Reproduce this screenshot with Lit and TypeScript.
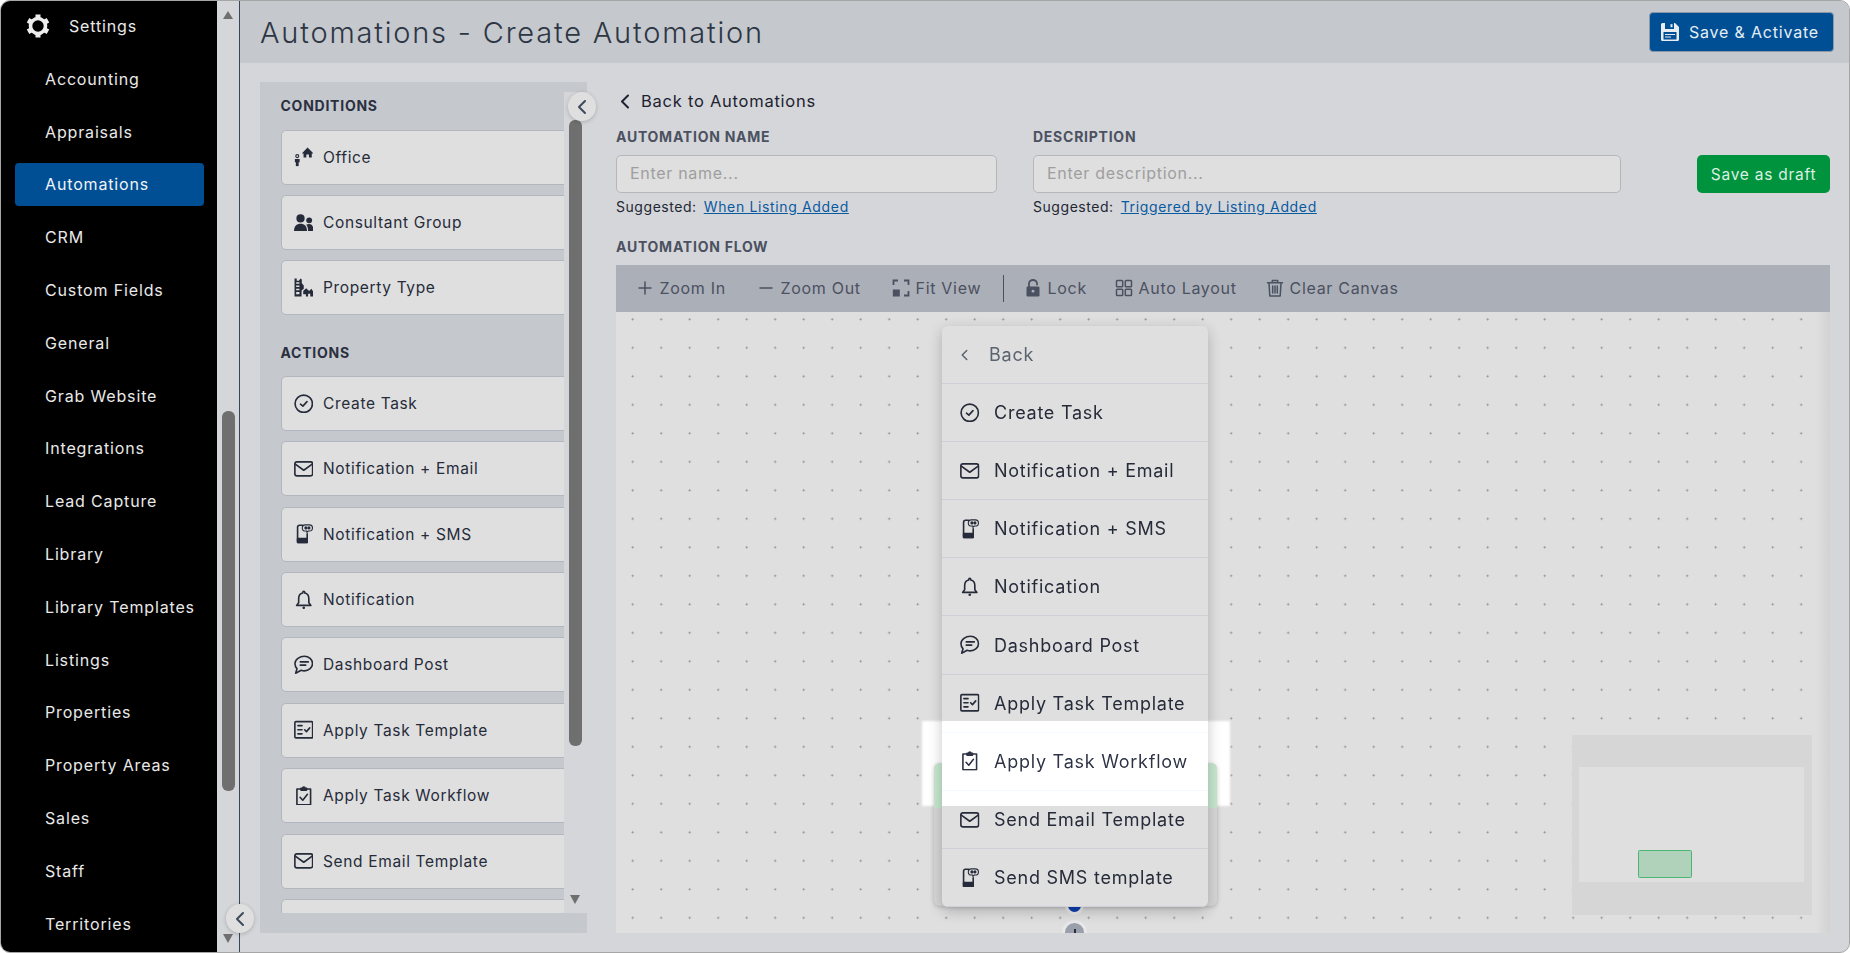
import { LitElement, html, css } from "lit";
import { customElement } from "lit/decorators.js";

const ic = (body: unknown) => html`<svg class="ic" viewBox="0 0 18 18" fill="none" stroke="currentColor" stroke-width="1.5" stroke-linecap="round" stroke-linejoin="round">${body}</svg>`;

const icons: Record<string, unknown> = {
  check: ic(html`<svg><circle cx="9" cy="9" r="8"/><path d="M6 9.400l2.200 1.800L12 7"/></svg>`),
  mail: ic(html`<svg><rect x=".8" y="2.600" width="16.400" height="13" rx="2"/><path d="M1.200 4.800L9 10.400l7.800-5.600"/></svg>`),
  sms: ic(html`<svg><path d="M8 1.200H5A1.700 1.700 0 0 0 3.300 2.900v12.700A1.700 1.700 0 0 0 5 17.300h5.500a1.700 1.700 0 0 0 1.700-1.700V9"/><path d="M3.300 13.500h8.900v3.800H3.300z" fill="currentColor"/><path d="M10.500.800h3.700a2.700 2.700 0 0 1 0 5.700h-1l-1.300 1.300V6.500h-1.400a2.800 2.800 0 0 1 0-5.700z" stroke-width="1"/><circle cx="11" cy="3.600" r=".7" fill="currentColor"/><circle cx="13.800" cy="3.600" r=".7" fill="currentColor"/></svg>`),
  bell: ic(html`<svg><path d="M9 1.200c-.5 0-.9.4-.9.9v.7C5.500 3.300 4.300 5.500 4.300 8.100v3.600L2.400 14.200h13.200l-1.900-2.500V8.100c0-2.600-1.200-4.800-3.800-5.300v-.7c0-.5-.4-.9-.9-.9z"/><circle cx="9" cy="16.400" r="1.200" fill="currentColor" stroke="none"/></svg>`),
  chat: ic(html`<svg><path d="M9.500 1.200c4.200 0 7.600 2.900 7.600 6.700s-3.400 6.700-7.600 6.700c-1 0-2-.2-2.900-.5L1.500 16.800l1.300-4C1.600 11.600.9 10 .9 7.900.9 4.100 5.300 1.200 9.500 1.200z"/><path d="M5.800 6.400h7.400M5.800 9.400h5"/></svg>`),
  template: ic(html`<svg><rect x=".8" y="1.500" width="16.400" height="15" rx="1"/><path d="M3.600 5.200h3.800M3.600 9h3.800M3.600 12.800h3.800M9.800 9l1.700 1.700 3-3.400"/></svg>`),
  workflow: ic(html`<svg><path d="M6 2.800H2.700v14.600h12.600V2.800H12"/><path d="M6.400 3.800V2.200h1.400a1.200 1.200 0 0 1 2.400 0h1.400v1.600z" fill="currentColor"/><path d="M5.600 10.400l2.500 2.700 4.300-5.400"/></svg>`),
  office: ic(html`<svg stroke="none" fill="currentColor"><path d="M12.500.500L18 6h-1.600v3.800h-2.600V7h-2.400v2.800H8.800V6H7.200z"/><circle cx="3" cy="8.400" r="1.400" fill="none" stroke="currentColor" stroke-width="1"/><path d="M.800 11h4.400v3H4.300v3.700H1.700V14H.800z"/></svg>`),
  group: ic(html`<svg stroke="none" fill="currentColor"><circle cx="6" cy="5" r="3.800"/><circle cx="14" cy="6.800" r="2.700"/><path d="M0 16.500c0-4.300 2.500-6.500 6-6.500s6 2.200 6 6.500z"/><path d="M13 16.500c0-2.800-.6-4.500-1.800-5.700.8-.4 1.800-.7 2.800-.7 2.600 0 4 2.200 4 6.400z"/></svg>`),
  ptype: ic(html`<svg stroke="none" fill="currentColor"><path d="M.500.500h2v2h2l1.500-2 1.200.8v3.500L9 7v3l-2 1.500V17H.500zM2 4v1.200h3V4zm0 3v1.200h3V7zm0 3v1.200h3V10zm0 3v2h3v-2z" fill-rule="evenodd"/><path d="M8.500 15V12l2.700-2.500L14 12l2-2 2 2.800V17h-3v-2.500h-2V17h-2v-2z"/></svg>`),
  plus: ic(html`<svg><path d="M9 3v12M3 9h12"/></svg>`),
  minus: ic(html`<svg><path d="M3 9h12"/></svg>`),
  fit: ic(html`<svg stroke-width="1.800" stroke-linecap="butt" stroke-linejoin="miter"><path d="M1.500 6V1.500H6M12 1.500h4.500V6M16.500 12v4.500H12"/><rect x=".8" y="10.500" width="7" height="7" fill="currentColor" stroke="none"/></svg>`),
  lock: ic(html`<svg><path d="M5 8V4.500a4 3.500 0 0 1 8 0v1" stroke-width="1.800"/><rect x="2.500" y="7.500" width="13" height="10" rx="1.200" fill="currentColor" stroke="none"/><circle cx="9" cy="12.200" r="1.400" fill="#abafb8" stroke="none"/></svg>`),
  grid: ic(html`<svg><rect x="1.500" y="1.500" width="6.200" height="6.200" rx=".8"/><rect x="10.300" y="1.500" width="6.200" height="6.200" rx=".8"/><rect x="1.500" y="10.300" width="6.200" height="6.200" rx=".8"/><rect x="10.300" y="10.300" width="6.200" height="6.200" rx=".8"/></svg>`),
  trash: ic(html`<svg><path d="M1.500 3.800h15M6.300 3.800V1.500h5.400v2.300M3 4l.8 13h10.400L15 4M6.700 7v7M11.300 7v7M9 7v7"/></svg>`),
};

const nav = ["Accounting", "Appraisals", "Automations", "CRM", "Custom Fields", "General", "Grab Website", "Integrations", "Lead Capture", "Library", "Library Templates", "Listings", "Properties", "Property Areas", "Sales", "Staff", "Territories"];

const conditions = [["office", "Office"], ["group", "Consultant Group"], ["ptype", "Property Type"]];

const actions = [
  ["check", "Create Task"], ["mail", "Notification + Email"], ["sms", "Notification + SMS"], ["bell", "Notification"],
  ["chat", "Dashboard Post"], ["template", "Apply Task Template"], ["workflow", "Apply Task Workflow"], ["mail", "Send Email Template"],
];

const menu = [...actions, ["sms", "Send SMS template"]];

// widths are the start-to-start distances of the toolbar items
const tools: [string, string, number][] = [
  ["plus", "Zoom In", 121], ["minus", "Zoom Out", 135], ["fit", "Fit View", 111], ["sep", "", 21],
  ["lock", "Lock", 91], ["grid", "Auto Layout", 151], ["trash", "Clear Canvas", 140],
];

@customElement("app-root")
export class AppRoot extends LitElement {
  static styles = css`
    :host {
      display: block;
      width: 1850px;
      height: 953px;
      background: #fff;
      font-family: Inter, "Noto Sans", sans-serif;
      color: #262b3a;
    }
    .frame {
      box-sizing: border-box;
      display: flex;
      width: 100%;
      height: 100%;
      border: 1px solid #a6a6a6;
      border-radius: 10px;
      overflow: hidden;
      background: #d5d6da;
    }
    .ic { width: 19.500px; height: 19.500px; flex: none; display: block; }

    /* sidebar */
    .side { width: 216px; flex: none; background: #000; color: #e9e9e9; font-size: 16px; letter-spacing: .85px; overflow: hidden; }
    .settings { display: flex; align-items: center; box-sizing: border-box; height: 51.900px; padding: 0 0 2px 24px; gap: 18px; }
    .gear { width: 26px; height: 26px; flex: none; }
    .nav-row { height: 52.800px; padding: 0 13px 0 14px; display: flex; align-items: center; }
    .nav-row span { flex: 1; height: 43px; line-height: 43px; padding-left: 30px; border-radius: 4px; }
    .nav-row .on { background: #004f94; color: #f0f4f8; }
    .side-bar { width: 22px; flex: none; background: #d5d6da; border-right: 1px solid #39445a; position: relative; }
    .thumb { background: #6f6f6f; border-radius: 6px; }
    .side-bar .thumb { width: 13px; height: 380px; margin: 410px 0 0 5px; }
    .arrow-up, .arrow-down { position: absolute; width: 0; height: 0; border-left: 5.500px solid transparent; border-right: 5.500px solid transparent; }
    .arrow-up { border-bottom: 8px solid #6f6f6f; }
    .arrow-down { border-top: 9px solid #6f6f6f; }
    .side-bar .arrow-up { left: 6px; top: 10px; }
    .side-bar .arrow-down { left: 6px; top: 933px; }
    .collapse {
      position: absolute;
      width: 28px;
      height: 29px;
      border-radius: 50%;
      background: #dfdfdf;
      box-shadow: 0 1px 4px rgba(0, 0, 0, .2);
      color: #3f4a5e;
      display: flex;
      align-items: center;
      justify-content: center;
      z-index: 3;
    }
    .side-bar .collapse { left: 9px; top: 903px; }
    .collapse svg { width: 14px; height: 16px; }

    /* main */
    .main { flex: 1; min-width: 0; display: flex; flex-direction: column; }
    .head { height: 62px; flex: none; background: #c5c8cd; display: flex; align-items: center; justify-content: space-between; padding: 0 15px 0 20px; }
    .title { font-size: 29px; font-weight: 300; letter-spacing: 1.800px; color: #2d3644; }
    .save { display: flex; align-items: center; gap: 9px; width: 185px; height: 40px; box-sizing: border-box; padding-left: 10px; background: #004f94; border: 1px solid #8a98a8; border-radius: 4px; color: #e6edf3; font-size: 16px; letter-spacing: .8px; }
    .save svg { width: 20px; height: 20px; }
    .body { flex: 1; display: flex; padding: 19px 19px 19px 20px; min-height: 0; }

    /* left panel */
    .panel { width: 327px; flex: none; background: #c5c8cd; display: flex; padding: 10px 0 20px; box-sizing: border-box; position: relative; }
    .list { flex: 1; overflow: hidden; padding-left: 20.500px; }
    .group-label { height: 28px; line-height: 28px; font-size: 14px; font-weight: 700; letter-spacing: .75px; color: #2a3040; }
    .cards { width: 320px; display: flex; flex-direction: column; gap: 10.400px; padding-top: 9.500px; }
    .actions-label { margin-top: 24px; }
    .actions-label + .cards { padding-top: 8.500px; }
    .card { height: 55px; box-sizing: border-box; background: #dfdfdf; border: 1px solid #b2b6be; border-radius: 5px; display: flex; align-items: center; padding-left: 12px; gap: 10px; font-size: 15.500px; letter-spacing: .65px; color: #262b3a; flex: none; }
    .strip { width: 23px; flex: none; background: #d5d6da; position: relative; }
    .strip .thumb { width: 13px; height: 626px; margin: 28px 0 0 5px; }
    .strip .arrow-down { left: 6px; top: 803px; }
    .panel > .collapse { left: 308px; top: 10px; }

    /* right column */
    .right { flex: 1; min-width: 0; margin-left: 29px; display: flex; flex-direction: column; }
    .back { display: flex; align-items: center; gap: 10px; height: 24px; margin-top: 7px; font-size: 16.500px; letter-spacing: .75px; color: #1d2230; padding-left: 3px; }
    .back svg { width: 12px; height: 17px; }
    .form { display: flex; margin-top: 14px; }
    .field { display: flex; flex-direction: column; }
    .field.name { width: 381px; margin-right: 36px; }
    .field.desc { width: 588px; }
    .label { height: 20px; line-height: 20px; font-size: 14px; font-weight: 700; letter-spacing: .75px; color: #4b5160; }
    .input { height: 38px; margin-top: 8px; box-sizing: border-box; background: #dfdfdf; border: 1.500px solid #b5b5bc; border-radius: 5px; padding-left: 13px; line-height: 35px; font-size: 16px; letter-spacing: .7px; color: #9e9e9e; }
    .hint { height: 20px; margin-top: 4px; line-height: 20px; font-size: 14px; letter-spacing: .55px; color: #222733; display: flex; gap: 7px; }
    .hint a { color: #0a5aa0; text-decoration: underline; letter-spacing: .65px; }
    .draft { margin: 28px 0 0 auto; width: 133px; height: 38px; display: flex; align-items: center; justify-content: center; background: #00933e; border-radius: 5px; color: #dcefe2; font-size: 15.500px; letter-spacing: .75px; }
    .flow-label { margin-top: 20px; }
    .toolbar { height: 47px; box-sizing: border-box; padding: 0 0 1px 20px; margin-top: 8px; flex: none; background: #abafb8; display: flex; align-items: center; color: #4b5160; font-size: 16px; letter-spacing: .7px; }
    .tool { display: flex; align-items: center; gap: 5.500px; flex: none; }
    .tool .ic { width: 18px; height: 18px; }
    .sep { width: 1px; height: 27px; background: #4b5160; }

    /* canvas */
    .canvas {
      flex: 1;
      position: relative;
      overflow: hidden;
      background-color: #dfdfdf;
      background-image: radial-gradient(circle, #8a8a8a 0, #8a8a8a .7px, transparent 1.300px);
      background-size: 28.500px 28.500px;
      background-position: 2.450px -6.950px;
    }
    .canvas::after { content: ""; position: absolute; top: 0; bottom: 0; right: 0; width: 14px; background: linear-gradient(90deg, transparent, #d2d2d2); }
    .glow { position: absolute; left: 306px; top: 409px; width: 308px; height: 85px; background: #fff; filter: blur(1.200px); }
    .node { position: absolute; left: 318px; top: 451px; width: 283px; height: 143px; border-radius: 6px; background: #d6d6d6; box-shadow: 0 1px 4px rgba(0, 0, 0, .2); overflow: hidden; }
    .node div { height: 45px; background: #c6e6cf; }
    .dot { position: absolute; left: 452px; top: 587px; width: 13px; height: 13px; border-radius: 50%; background: #0e3fae; box-shadow: 0 0 0 3px #eaeaea; }
    .add { position: absolute; left: 449px; top: 611px; width: 19px; height: 19px; border-radius: 50%; background: #9aa0ab; box-shadow: 0 0 0 3px #e8e8e8; }
    .add::after { content: ""; position: absolute; left: 9px; top: 6px; width: 1.500px; height: 12px; background: #2c2c3a; }
    .menu { position: absolute; left: 326px; top: 14px; width: 266px; border-radius: 6px; background: #dfdfdf; box-shadow: 0 4px 14px rgba(0, 0, 0, .22); overflow: hidden; z-index: 2; }
    .row { height: 58.100px; box-sizing: border-box; border-bottom: 1px solid #cdd0d6; display: flex; align-items: center; padding-left: 18px; gap: 14.500px; font-size: 18px; letter-spacing: .75px; color: #262b3a; }
    .row:last-of-type { border-bottom: 0; }
    .row.back-row { color: #5b6270; gap: 20px; }
    .row.back-row svg { width: 9px; height: 12px; }
    .spot { position: absolute; left: 0; right: 0; top: 395px; height: 85px; background: #292929; mix-blend-mode: color-dodge; }
    .mini { position: absolute; right: 18px; bottom: 18px; width: 240px; height: 180px; display: block; }
  `;

  private _chevron() {
    return html`<svg viewBox="0 0 12 16" fill="none" stroke="currentColor" stroke-width="2" stroke-linecap="round" stroke-linejoin="round"><path d="M9 2L3 8l6 6"/></svg>`;
  }

  private _card(item: string[]) {
    return html`<div class="card">${icons[item[0]]}<span>${item[1]}</span></div>`;
  }

  render() {
    return html`
      <div class="frame">
        <aside class="side">
          <div class="settings">
            <svg class="gear" viewBox="0 0 26 26" fill="none" stroke="#eee">
              <circle cx="13" cy="13" r="7.500" stroke-width="3.600"/>
              ${[0, 60, 120, 180, 240, 300].map((a) => html`<svg><path d="M13 1.500v3.500" stroke-width="5" transform="rotate(${a} 13 13)"/></svg>`)}
            </svg>
            <span>Settings</span>
          </div>
          ${nav.map((n) => html`<div class="nav-row"><span class=${n === "Automations" ? "on" : ""}>${n}</span></div>`)}
        </aside>
        <div class="side-bar">
          <div class="arrow-up"></div>
          <div class="thumb"></div>
          <div class="arrow-down"></div>
          <div class="collapse">${this._chevron()}</div>
        </div>
        <div class="main">
          <header class="head">
            <div class="title">Automations - Create Automation</div>
            <div class="save">
              <svg viewBox="0 0 20 20"><path d="M1 2.500A1.500 1.500 0 0 1 2.500 1H15l4 4v12.500a1.500 1.500 0 0 1-1.500 1.500h-15A1.500 1.500 0 0 1 1 17.500z" fill="#e8edf2"/><rect x="5" y="1" width="9" height="6" fill="#004f94"/><rect x="10.500" y="2.200" width="2" height="3" fill="#e8edf2"/><rect x="3.500" y="10" width="13" height="7.500" fill="#004f94"/><path d="M5 12.500h10M5 15h6" stroke="#e8edf2" stroke-width="1"/></svg>
              <span>Save &amp; Activate</span>
            </div>
          </header>
          <div class="body">
            <section class="panel">
              <div class="list">
                <div class="group-label">CONDITIONS</div>
                <div class="cards">${conditions.map((c) => this._card(c))}</div>
                <div class="group-label actions-label">ACTIONS</div>
                <div class="cards">
                  ${actions.map((c) => this._card(c))}
                  <div class="card"></div>
                </div>
              </div>
              <div class="strip">
                <div class="thumb"></div>
                <div class="arrow-down"></div>
              </div>
              <div class="collapse">${this._chevron()}</div>
            </section>
            <section class="right">
              <div class="back">${this._chevron()}<span>Back to Automations</span></div>
              <div class="form">
                <div class="field name">
                  <div class="label">AUTOMATION NAME</div>
                  <div class="input">Enter name...</div>
                  <div class="hint"><span>Suggested:</span><a>When Listing Added</a></div>
                </div>
                <div class="field desc">
                  <div class="label">DESCRIPTION</div>
                  <div class="input">Enter description...</div>
                  <div class="hint"><span>Suggested:</span><a>Triggered by Listing Added</a></div>
                </div>
                <div class="draft">Save as draft</div>
              </div>
              <div class="label flow-label">AUTOMATION FLOW</div>
              <div class="toolbar">
                ${tools.map((t) => t[0] === "sep"
                  ? html`<div class="tool" style="width:${t[2]}px"><div class="sep"></div></div>`
                  : html`<div class="tool" style="width:${t[2]}px">${icons[t[0]]}<span>${t[1]}</span></div>`)}
              </div>
              <div class="canvas">
                <div class="glow"></div>
                <div class="node"><div></div></div>
                <div class="dot"></div>
                <div class="add"></div>
                <div class="menu">
                  <div class="row back-row">${this._chevron()}<span>Back</span></div>
                  ${menu.map((m) => html`<div class="row">${icons[m[0]]}<span>${m[1]}</span></div>`)}
                  <div class="spot"></div>
                </div>
                <svg class="mini" viewBox="0 0 240 180">
                  <rect width="240" height="180" fill="#d6d6d6"/>
                  <rect x="7" y="32" width="225" height="115" fill="#dfdfdf"/>
                  <rect x="66.500" y="115.500" width="53" height="27" rx="1" fill="#b0d2ba" stroke="#4cb574"/>
                </svg>
              </div>
            </section>
          </div>
        </div>
      </div>
    `;
  }
}
